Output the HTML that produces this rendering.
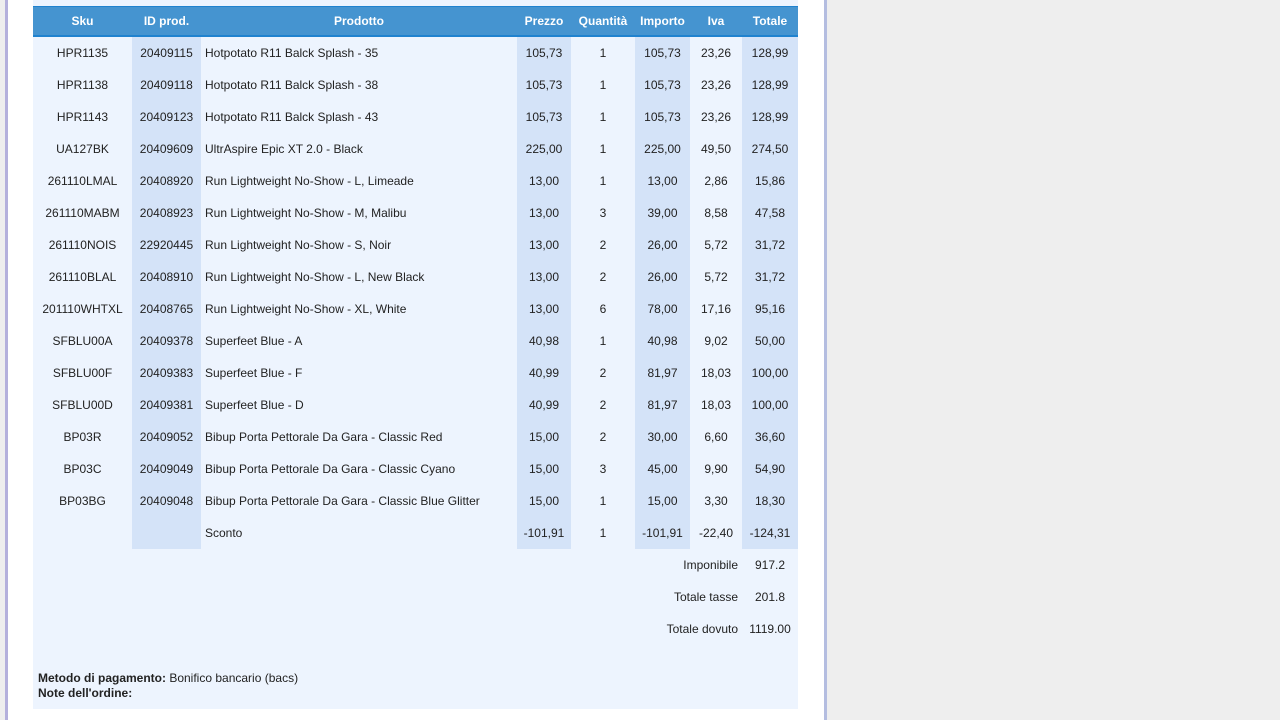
<!DOCTYPE html>
<html><head><meta charset="utf-8"><style>
body{margin:0;width:1280px;height:720px;background:#eeeeee;font-family:"Liberation Sans",sans-serif;overflow:hidden;position:relative}
.panel{position:absolute;left:5px;top:0;width:816px;height:720px;background:#fff;border-left:3px solid #b4b0dc;border-right:3px solid #b4bde0}
.wrap{position:absolute;left:25px;top:0;width:765px;height:709px;background:#edf4fe}
table{border-collapse:collapse;position:absolute;top:6px;left:0;width:765px;font-size:12px;color:#222;table-layout:fixed}
th{background:#4594d0;color:#fff;font-weight:bold;height:28px;padding:0;border-bottom:2px solid #1f82cf;border-top:1px solid #1f82cf}
td{height:32px;padding:0 4px;text-align:center}
td.l{text-align:left}
.s{background:#d4e3f8}
td.r{text-align:right;padding-right:4px}
.pay{position:absolute;left:5px;top:671px;font-size:12px;line-height:14.5px;color:#222}
</style></head><body>
<div class="panel"><div class="wrap">
<table>
<colgroup><col style="width:99px"><col style="width:69px"><col style="width:316px"><col style="width:54px"><col style="width:64px"><col style="width:55px"><col style="width:52px"><col style="width:56px"></colgroup>
<tr><th>Sku</th><th>ID prod.</th><th>Prodotto</th><th>Prezzo</th><th>Quantità</th><th>Importo</th><th>Iva</th><th>Totale</th></tr>
<tr><td>HPR1135</td><td class="s">20409115</td><td class="l">Hotpotato R11 Balck Splash - 35</td><td class="s">105,73</td><td>1</td><td class="s">105,73</td><td>23,26</td><td class="s">128,99</td></tr>
<tr><td>HPR1138</td><td class="s">20409118</td><td class="l">Hotpotato R11 Balck Splash - 38</td><td class="s">105,73</td><td>1</td><td class="s">105,73</td><td>23,26</td><td class="s">128,99</td></tr>
<tr><td>HPR1143</td><td class="s">20409123</td><td class="l">Hotpotato R11 Balck Splash - 43</td><td class="s">105,73</td><td>1</td><td class="s">105,73</td><td>23,26</td><td class="s">128,99</td></tr>
<tr><td>UA127BK</td><td class="s">20409609</td><td class="l">UltrAspire Epic XT 2.0 - Black</td><td class="s">225,00</td><td>1</td><td class="s">225,00</td><td>49,50</td><td class="s">274,50</td></tr>
<tr><td>261110LMAL</td><td class="s">20408920</td><td class="l">Run Lightweight No-Show - L, Limeade</td><td class="s">13,00</td><td>1</td><td class="s">13,00</td><td>2,86</td><td class="s">15,86</td></tr>
<tr><td>261110MABM</td><td class="s">20408923</td><td class="l">Run Lightweight No-Show - M, Malibu</td><td class="s">13,00</td><td>3</td><td class="s">39,00</td><td>8,58</td><td class="s">47,58</td></tr>
<tr><td>261110NOIS</td><td class="s">22920445</td><td class="l">Run Lightweight No-Show - S, Noir</td><td class="s">13,00</td><td>2</td><td class="s">26,00</td><td>5,72</td><td class="s">31,72</td></tr>
<tr><td>261110BLAL</td><td class="s">20408910</td><td class="l">Run Lightweight No-Show - L, New Black</td><td class="s">13,00</td><td>2</td><td class="s">26,00</td><td>5,72</td><td class="s">31,72</td></tr>
<tr><td>201110WHTXL</td><td class="s">20408765</td><td class="l">Run Lightweight No-Show - XL, White</td><td class="s">13,00</td><td>6</td><td class="s">78,00</td><td>17,16</td><td class="s">95,16</td></tr>
<tr><td>SFBLU00A</td><td class="s">20409378</td><td class="l">Superfeet Blue - A</td><td class="s">40,98</td><td>1</td><td class="s">40,98</td><td>9,02</td><td class="s">50,00</td></tr>
<tr><td>SFBLU00F</td><td class="s">20409383</td><td class="l">Superfeet Blue - F</td><td class="s">40,99</td><td>2</td><td class="s">81,97</td><td>18,03</td><td class="s">100,00</td></tr>
<tr><td>SFBLU00D</td><td class="s">20409381</td><td class="l">Superfeet Blue - D</td><td class="s">40,99</td><td>2</td><td class="s">81,97</td><td>18,03</td><td class="s">100,00</td></tr>
<tr><td>BP03R</td><td class="s">20409052</td><td class="l">Bibup Porta Pettorale Da Gara - Classic Red</td><td class="s">15,00</td><td>2</td><td class="s">30,00</td><td>6,60</td><td class="s">36,60</td></tr>
<tr><td>BP03C</td><td class="s">20409049</td><td class="l">Bibup Porta Pettorale Da Gara - Classic Cyano</td><td class="s">15,00</td><td>3</td><td class="s">45,00</td><td>9,90</td><td class="s">54,90</td></tr>
<tr><td>BP03BG</td><td class="s">20409048</td><td class="l">Bibup Porta Pettorale Da Gara - Classic Blue Glitter</td><td class="s">15,00</td><td>1</td><td class="s">15,00</td><td>3,30</td><td class="s">18,30</td></tr>
<tr><td></td><td class="s"></td><td class="l">Sconto</td><td class="s">-101,91</td><td>1</td><td class="s">-101,91</td><td>-22,40</td><td class="s">-124,31</td></tr>
<tr><td colspan="7" class="r">Imponibile</td><td>917.2</td></tr>
<tr><td colspan="7" class="r">Totale tasse</td><td>201.8</td></tr>
<tr><td colspan="7" class="r">Totale dovuto</td><td>1119.00</td></tr>
</table>
<div class="pay"><b>Metodo di pagamento:</b> Bonifico bancario (bacs)<br><b>Note dell'ordine:</b></div>
</div></div>
</body></html>
